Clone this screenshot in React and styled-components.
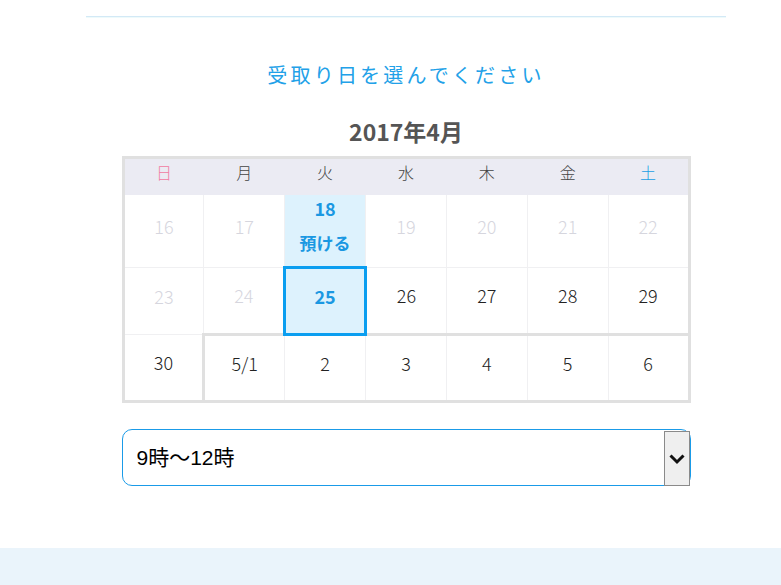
import React from 'react'
import styled, { createGlobalStyle } from 'styled-components'

const GlobalStyle = createGlobalStyle`
  body {
    margin: 0;
    background: #fff;
    font-family: "Noto Sans CJK JP", "Noto Sans", sans-serif;
  }
`

const weeks = [
  [
    { d: '16', past: true },
    { d: '17', past: true },
    { d: '18', drop: true },
    { d: '19', past: true },
    { d: '20', past: true },
    { d: '21', past: true },
    { d: '22', past: true },
  ],
  [
    { d: '23', past: true },
    { d: '24', past: true },
    { d: '25', picked: true },
    { d: '26' },
    { d: '27' },
    { d: '28' },
    { d: '29' },
  ],
  [
    { d: '30' },
    { d: '5/1', next: true, first: true },
    { d: '2', next: true },
    { d: '3', next: true },
    { d: '4', next: true },
    { d: '5', next: true },
    { d: '6', next: true },
  ],
]

const days = ['日', '月', '火', '水', '木', '金', '土']
const rowHeights = [73, 67, 67]

function App() {
  return (
    <>
      <GlobalStyle />
      <Page>
        <Section>
          <Title>受取り日を選んでください</Title>
          <Month>2017年4月</Month>
          <Calendar>
            <thead>
              <tr>
                {days.map((w, i) => (
                  <Head key={w} $tone={i === 0 ? 'sun' : i === 6 ? 'sat' : ''}>{w}</Head>
                ))}
              </tr>
            </thead>
            <tbody>
              {weeks.map((row, r) => (
                <Row key={r} $h={rowHeights[r]}>
                  {row.map((c) => (
                    <Cell
                      key={c.d}
                      $past={c.past}
                      $drop={c.drop}
                      $picked={c.picked}
                      $next={c.next}
                      $first={c.first}
                    >
                      {c.d}
                      {c.drop && <Note>預ける</Note>}
                    </Cell>
                  ))}
                </Row>
              ))}
            </tbody>
          </Calendar>
          <SelectBox>
            <TimeSelect defaultValue="9-12">
              <option value="9-12">9時〜12時</option>
              <option value="12-15">12時〜15時</option>
              <option value="15-18">15時〜18時</option>
            </TimeSelect>
            <Arrow>
              <svg width="18" height="12" viewBox="0 0 18 12">
                <path d="M2.5 2.5 L9 9 L15.5 2.5" fill="none" stroke="#111" strokeWidth="3" />
              </svg>
            </Arrow>
          </SelectBox>
        </Section>
      </Page>
      <Footer />
    </>
  )
}

const Page = styled.div`
  width: 640px;
  margin: 16px 0 0 86px;
  border-top: 1px solid #d3e9f6;
  box-shadow: inset 0 1px 0 #eefafb;
`

const Section = styled.div`
  width: 569px;
  margin: 0 auto;
  padding: 43px 0 62px;
`

const Title = styled.h2`
  margin: 0;
  text-align: center;
  font-size: 20px;
  line-height: 30px;
  font-weight: 400;
  letter-spacing: 3.2px;
  color: #22a1e8;
`

const Month = styled.h3`
  margin: 26px 0 10px;
  text-align: center;
  font-size: 23px;
  line-height: 30px;
  font-weight: 700;
  color: #555;
`

const Calendar = styled.table`
  width: 100%;
  table-layout: fixed;
  border-collapse: collapse;
  border: 3px solid #e0e0e0;
`

const Head = styled.th`
  height: 25px;
  padding: 0 0 10px;
  line-height: 22px;
  background: #ebebf3;
  font-size: 16px;
  font-weight: 300;
  color: ${(p) => (p.$tone === 'sun' ? '#f27aa2' : p.$tone === 'sat' ? '#229ee4' : '#444')};
  border: 1px solid #ebebf3;
`

const Row = styled.tr`
  height: ${(p) => p.$h}px;
`

const Cell = styled.td`
  padding: 0 0 ${(p) => (p.$drop ? 1 : 11)}px;
  text-align: center;
  font-size: 18px;
  line-height: ${(p) => (p.$drop ? 26 : 36)}px;
  color: ${(p) => (p.$past ? '#d6d6de' : p.$drop || p.$picked ? '#1a98e2' : '#222')};
  font-weight: ${(p) => (p.$drop || p.$picked ? 700 : 300)};
  background: ${(p) => (p.$drop || p.$picked ? '#ddf2fd' : '#fff')};
  border: 1px solid #f0f0f2;
  ${(p) => p.$next && 'border-top: 3px solid #e0e0e0;'}
  ${(p) => p.$first && 'border-left: 3px solid #e0e0e0;'}
  ${(p) => p.$picked && 'border: 3px solid #0a9ef0;'}
`

const Note = styled.div`
  line-height: 44px;
  font-size: 17px;
`

const SelectBox = styled.div`
  position: relative;
  margin-top: 26px;
`

const TimeSelect = styled.select`
  display: block;
  width: 100%;
  height: 57px;
  padding: 0 0 1px 14px;
  appearance: none;
  border: 1px solid #1a9be8;
  border-radius: 10px;
  background: #fff;
  font-family: "Liberation Sans", "Noto Sans CJK JP", sans-serif;
  font-size: 21px;
  color: #000;
  outline: none;
`

const Arrow = styled.span`
  position: absolute;
  top: 2px;
  right: 1px;
  width: 24px;
  height: 53px;
  display: flex;
  align-items: center;
  justify-content: center;
  background: #efefef;
  border: 1px solid #8a8a8a;
  pointer-events: none;
`

const Footer = styled.div`
  height: 37px;
  background: #eaf4fb;
`

export default App
